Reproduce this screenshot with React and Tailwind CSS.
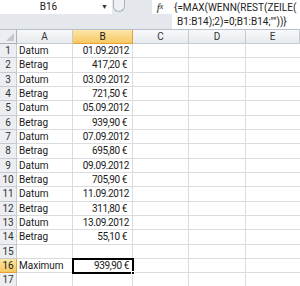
import React from "react";

const rows = [
  ["Datum", "01.09.2012"],
  ["Betrag", "417,20 €"],
  ["Datum", "03.09.2012"],
  ["Betrag", "721,50 €"],
  ["Datum", "05.09.2012"],
  ["Betrag", "939,90 €"],
  ["Datum", "07.09.2012"],
  ["Betrag", "695,80 €"],
  ["Datum", "09.09.2012"],
  ["Betrag", "705,90 €"],
  ["Datum", "11.09.2012"],
  ["Betrag", "311,80 €"],
  ["Datum", "13.09.2012"],
  ["Betrag", "55,10 €"],
  ["", ""],
  ["Maximum", "939,90 €"],
  ["", ""],
];

// 15px rows at 2,5,8,11,14 so the grid lands where the scaled screenshot has it
const tall = [2, 5, 8, 11, 14];

const cols = ["A", "B", "C", "D", "E"];

const FormulaBar = () => (
  <div className="flex h-[30px] border-b border-[#b9c0c9] bg-[#e4e7ec] text-[#222]">
    <div className="flex w-[112px] flex-col">
      <div className="flex h-[14px] items-center bg-white">
        <span className="w-[97px] text-center text-[10px] leading-none">B16</span>
        <span className="w-[15px] text-center text-[7px] leading-none text-[#333]">▼</span>
      </div>
    </div>
    <div className="flex w-[40px] flex-col">
      <div className="flex h-[14px] items-start pl-[1px]">
        <div className="h-[12px] w-[12px] rounded-b-full border border-t-0 border-[#aab1bb] bg-[#eef0f3]" />
      </div>
    </div>
    <div className="flex w-[20px] flex-col">
      <div className="flex h-[14px] items-center justify-center bg-white pr-[4px] font-['Liberation_Serif'] text-[11px] italic leading-none">
        f<span className="text-[8px]">x</span>
      </div>
    </div>
    <div className="flex-1 bg-white pl-[2px] pt-[1px] text-[10px] leading-[14px] whitespace-nowrap">
      <div>{"{=MAX(WENN(REST(ZEILE("}</div>
      <div className="pl-[3px]">{'B1:B14);2)=0;B1:B14;""))}'}</div>
    </div>
  </div>
);

const App = () => {
  return (
    <div className="h-[286px] w-[300px] overflow-hidden bg-white font-['Roboto',sans-serif] text-[#1a1a1a]">
      <FormulaBar />
      <div className="grid grid-cols-[17px_56px_60px_56px_57px_1fr]">
        <div className="relative h-[14px] border-r border-b border-[#a9b0ba] bg-[#eceef1]">
          <div className="absolute right-[2px] bottom-[2px] h-0 w-0 border-b-[8px] border-l-[8px] border-b-[#c3c8cf] border-l-transparent" />
        </div>
        {cols.map((c) => (
          <div
            key={c}
            className={
              c === "B"
                ? "flex h-[14px] items-center justify-center border-r border-b border-[#e2a23c] bg-gradient-to-b from-[#fce6a6] to-[#f7c860] text-[10px] leading-none"
                : "flex h-[14px] items-center justify-center border-r border-b border-[#c6cbd2] bg-gradient-to-b from-[#f7f8fa] to-[#e7eaee] text-[10px] leading-none text-[#333]"
            }
          >
            {c}
          </div>
        ))}

        {rows.map(([a, b], i) => {
          const n = i + 1;
          const h = tall.includes(n) ? "h-[15px]" : "h-[14px]";
          const sel = n === 16;
          return (
            <React.Fragment key={n}>
              <div
                className={
                  sel
                    ? `${h} flex items-center justify-center border-r border-b border-[#e2a23c] bg-gradient-to-b from-[#fce6a6] to-[#f7c860] text-[10px] leading-none`
                    : `${h} flex items-center justify-center border-r border-b border-[#c6cbd2] bg-[#eceef1] text-[10px] leading-none text-[#333]`
                }
              >
                {n}
              </div>
              <div className={`${h} flex items-center border-r border-b border-[#dadcdf] pl-[2px] text-[10px] leading-none`}>
                {a}
              </div>
              <div
                className={
                  sel
                    ? `${h} relative flex items-center justify-end pr-[4px] text-[10px] leading-none tracking-[-0.4px] outline-2 -outline-offset-1 outline-black`
                    : `${h} flex items-center justify-end border-r border-b border-[#dadcdf] text-[10px] leading-none tracking-[-0.4px] ${b.includes("€") ? "pr-[5px]" : "pr-[3px]"}`
                }
              >
                {b}
                {sel && (
                  <div className="absolute -right-[2px] -bottom-[2px] h-[4px] w-[4px] border border-white bg-black" />
                )}
              </div>
              <div className={`${h} border-r border-b border-[#dadcdf]`} />
              <div className={`${h} border-r border-b border-[#dadcdf]`} />
              <div className={`${h} border-b border-[#dadcdf]`} />
            </React.Fragment>
          );
        })}
      </div>
    </div>
  );
};

export default App;
